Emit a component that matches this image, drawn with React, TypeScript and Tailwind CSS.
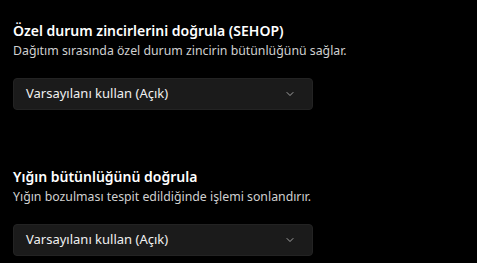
import { ChevronDown } from "lucide-react"

type Props = { title: string; desc: string; className?: string }

function Setting({ title, desc, className }: Props) {
    return (
        <div className={className}>
            <p className="text-[14px] leading-[20px] font-semibold text-white">{title}</p>
            <p className="text-[12.3px] leading-[16px] text-[#d0d0d0] mt-[2px]">{desc}</p>
            <div className="mt-[19px] w-[300px] h-[32px] rounded-[4px] bg-[#1b1b1b] border border-[#232323] flex items-center justify-between pl-[12px] pr-[16px]">
                <span className="text-[13px] text-[#f0f0f0]">Varsayılanı kullan (Açık)</span>
                <ChevronDown className="w-[12px] h-[12px] text-[#cfcfcf]" strokeWidth={1.5} />
            </div>
        </div>
    )
}

export default function App() {
    return (
        <div className="w-[477px] h-[263px] bg-black px-[13px] pt-[21px] overflow-hidden" style={{ fontFamily: '"Noto Sans", "Open Sans", sans-serif' }}>
            <Setting title="Özel durum zincirlerini doğrula (SEHOP)" desc="Dağıtım sırasında özel durum zincirin bütünlüğünü sağlar." />
            <Setting className="mt-[57px]" title="Yığın bütünlüğünü doğrula" desc="Yığın bozulması tespit edildiğinde işlemi sonlandırır." />
        </div>
    )
}
